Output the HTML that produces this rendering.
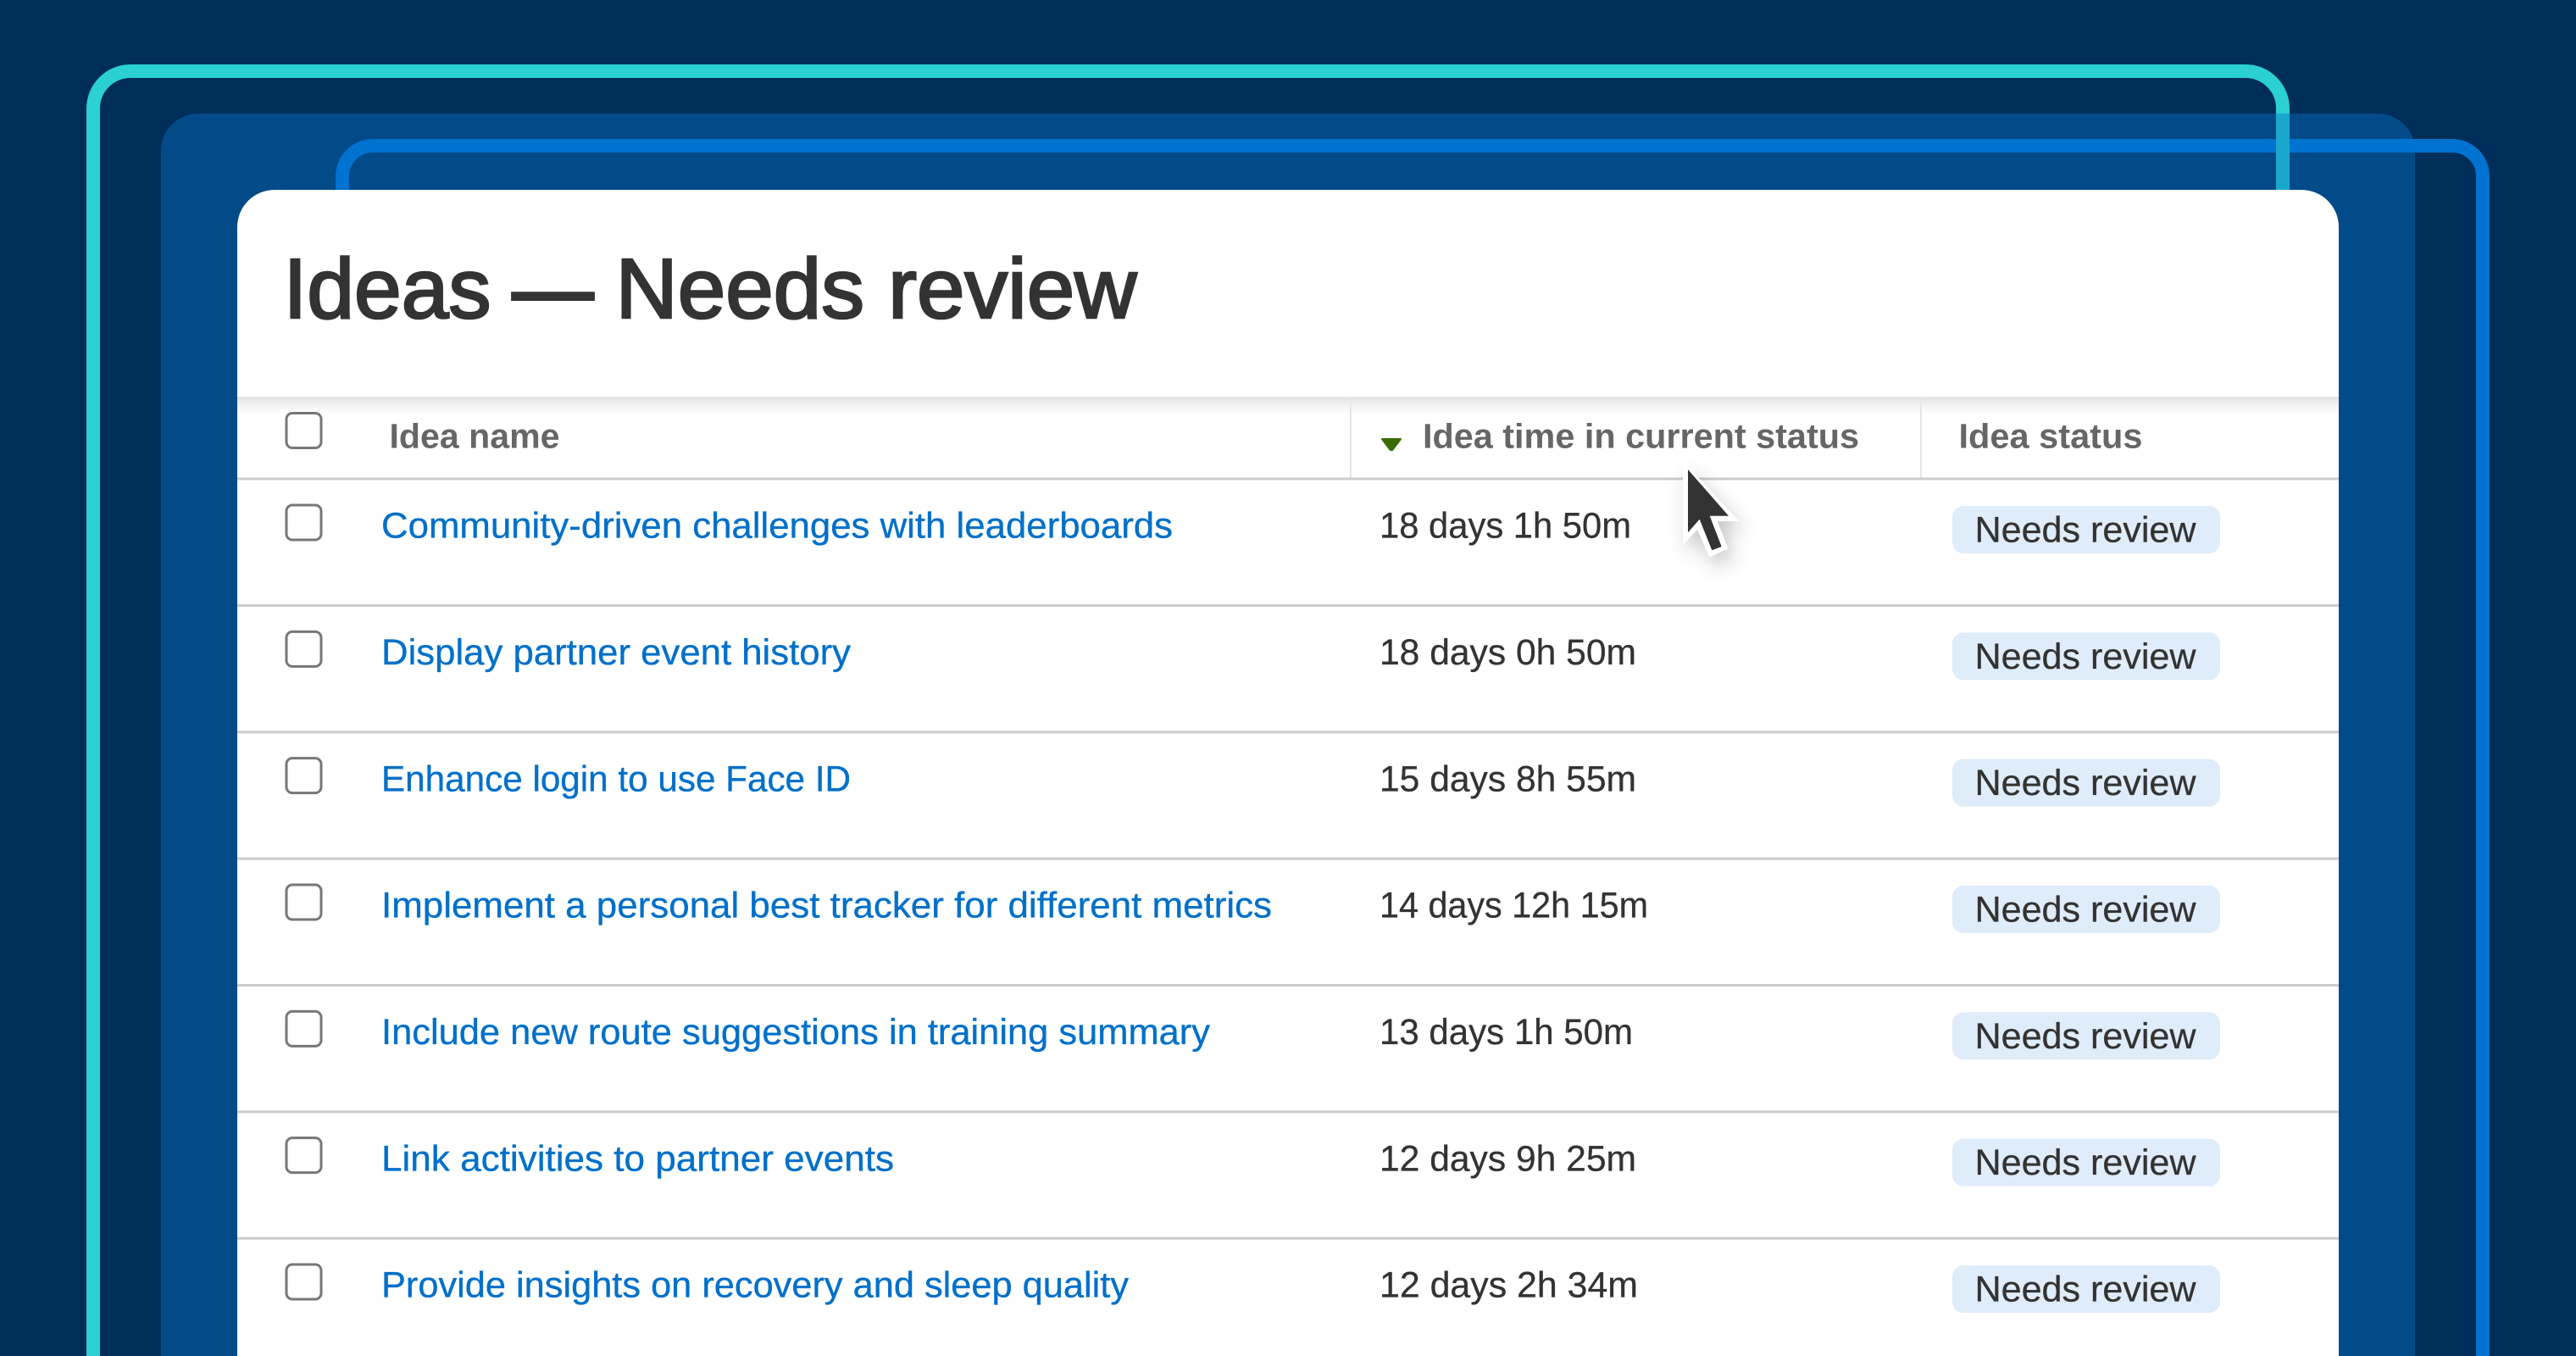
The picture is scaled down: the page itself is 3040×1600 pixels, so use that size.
<!DOCTYPE html>
<html lang="en">
<head>
<meta charset="utf-8">
<title>Ideas — Needs review</title>
<style>
html,body{margin:0;padding:0;width:3040px;height:1600px;overflow:hidden;background:#002e5b}
svg{display:block}
text{font-family:"Liberation Sans",Arial,sans-serif}
.t{font-size:43px;fill:#333;stroke:#333;stroke-width:.3px}
.l{font-size:43px;fill:#0070c9;stroke:#0070c9;stroke-width:.35px}
.h{font-size:41px;font-weight:bold;fill:#666}
.b{fill:#dfecf9}
.c{fill:#fff;stroke:#777;stroke-width:3}
.s{fill:#ccc}
.ti{font-size:100px;fill:#333;stroke:#333;stroke-width:2.6px}
</style>
</head>
<body>
<svg xmlns="http://www.w3.org/2000/svg" width="3040" height="1600" viewBox="0 0 3040 1600">
<defs>
<linearGradient id="sh" x1="0" y1="0" x2="0" y2="1">
<stop offset="0" stop-color="#e2e2e2"/><stop offset="1" stop-color="#fff"/>
</linearGradient>
</defs>
<rect width="3040" height="1600" fill="#002e5b"/>
<!-- teal outline -->
<path d="M110 1640V128a44 44 0 0 1 44-44H2650a44 44 0 0 1 44 44V1640" fill="none" stroke="#2ad0d3" stroke-width="16"/>
<!-- panel -->
<path d="M190 1640V178a44 44 0 0 1 44-44H2806a44 44 0 0 1 44 44V1640Z" fill="#034a89"/>
<!-- blue outline -->
<path d="M404 1640V208a36 36 0 0 1 36-36H2894a36 36 0 0 1 36 36V1640" fill="none" stroke="#0072cf" stroke-width="16"/>
<!-- teal under panel -->
<rect x="2686" y="134" width="16" height="100" fill="#1ba8ce"/>
<!-- card -->
<path d="M280 1640V268a44 44 0 0 1 44-44H2716a44 44 0 0 1 44 44V1640Z" fill="#fff"/>
<text class="ti" x="334.500" y="375" textLength="245" lengthAdjust="spacingAndGlyphs">Ideas</text>
<text class="ti" x="605" y="375" textLength="95" lengthAdjust="spacingAndGlyphs" style="stroke-width:4px">—</text>
<text class="ti" x="726.500" y="375" textLength="615" lengthAdjust="spacingAndGlyphs">Needs review</text>
<!-- header -->
<rect x="280" y="468" width="2480" height="20" fill="url(#sh)"/>
<rect x="1593" y="468" width="2" height="97" fill="#e6e6e6"/>
<rect x="2266" y="468" width="2" height="97" fill="#e6e6e6"/>
<rect class="c" x="338" y="487.500" width="41" height="41" rx="7"/>
<text class="h" x="459.500" y="528.500" textLength="201" lengthAdjust="spacingAndGlyphs">Idea name</text>
<path d="M1631 518H1653L1644 530Q1642 532.500 1640 530Z" fill="#3a6b00" stroke="#3a6b00" stroke-width="2" stroke-linejoin="round"/>
<text class="h" x="1679" y="528.500" textLength="515" lengthAdjust="spacingAndGlyphs">Idea time in current status</text>
<text class="h" x="2311.500" y="528.500" textLength="217" lengthAdjust="spacingAndGlyphs">Idea status</text>
<rect class="s" x="280" y="563.500" width="2480" height="3"/>

<g>
<rect class="c" x="338" y="596" width="41" height="41" rx="7"/>
<text class="l" x="450" y="634.700" textLength="934" lengthAdjust="spacingAndGlyphs">Community-driven challenges with leaderboards</text>
<text class="t" x="1628" y="634.700" textLength="297" lengthAdjust="spacingAndGlyphs">18 days 1h 50m</text>
<rect class="b" x="2304" y="597" width="316" height="56" rx="13"/>
<text class="t" x="2330.500" y="639.500" textLength="261" lengthAdjust="spacingAndGlyphs">Needs review</text>
<rect class="s" x="280" y="713" width="2480" height="3"/>
</g>
<g transform="translate(0,149.33)">
<rect class="c" x="338" y="596" width="41" height="41" rx="7"/>
<text class="l" x="450" y="634.700" textLength="554" lengthAdjust="spacingAndGlyphs">Display partner event history</text>
<text class="t" x="1628" y="634.700" textLength="303" lengthAdjust="spacingAndGlyphs">18 days 0h 50m</text>
<rect class="b" x="2304" y="597" width="316" height="56" rx="13"/>
<text class="t" x="2330.500" y="639.500" textLength="261" lengthAdjust="spacingAndGlyphs">Needs review</text>
<rect class="s" x="280" y="713" width="2480" height="3"/>
</g>
<g transform="translate(0,298.67)">
<rect class="c" x="338" y="596" width="41" height="41" rx="7"/>
<text class="l" x="450" y="634.700" textLength="554" lengthAdjust="spacingAndGlyphs">Enhance login to use Face ID</text>
<text class="t" x="1628" y="634.700" textLength="303" lengthAdjust="spacingAndGlyphs">15 days 8h 55m</text>
<rect class="b" x="2304" y="597" width="316" height="56" rx="13"/>
<text class="t" x="2330.500" y="639.500" textLength="261" lengthAdjust="spacingAndGlyphs">Needs review</text>
<rect class="s" x="280" y="713" width="2480" height="3"/>
</g>
<g transform="translate(0,448)">
<rect class="c" x="338" y="596" width="41" height="41" rx="7"/>
<text class="l" x="450" y="634.700" textLength="1051" lengthAdjust="spacingAndGlyphs">Implement a personal best tracker for different metrics</text>
<text class="t" x="1628" y="634.700" textLength="317" lengthAdjust="spacingAndGlyphs">14 days 12h 15m</text>
<rect class="b" x="2304" y="597" width="316" height="56" rx="13"/>
<text class="t" x="2330.500" y="639.500" textLength="261" lengthAdjust="spacingAndGlyphs">Needs review</text>
<rect class="s" x="280" y="713" width="2480" height="3"/>
</g>
<g transform="translate(0,597.33)">
<rect class="c" x="338" y="596" width="41" height="41" rx="7"/>
<text class="l" x="450" y="634.700" textLength="978" lengthAdjust="spacingAndGlyphs">Include new route suggestions in training summary</text>
<text class="t" x="1628" y="634.700" textLength="299" lengthAdjust="spacingAndGlyphs">13 days 1h 50m</text>
<rect class="b" x="2304" y="597" width="316" height="56" rx="13"/>
<text class="t" x="2330.500" y="639.500" textLength="261" lengthAdjust="spacingAndGlyphs">Needs review</text>
<rect class="s" x="280" y="713" width="2480" height="3"/>
</g>
<g transform="translate(0,746.67)">
<rect class="c" x="338" y="596" width="41" height="41" rx="7"/>
<text class="l" x="450" y="634.700" textLength="605" lengthAdjust="spacingAndGlyphs">Link activities to partner events</text>
<text class="t" x="1628" y="634.700" textLength="303" lengthAdjust="spacingAndGlyphs">12 days 9h 25m</text>
<rect class="b" x="2304" y="597" width="316" height="56" rx="13"/>
<text class="t" x="2330.500" y="639.500" textLength="261" lengthAdjust="spacingAndGlyphs">Needs review</text>
<rect class="s" x="280" y="713" width="2480" height="3"/>
</g>
<g transform="translate(0,896)">
<rect class="c" x="338" y="596" width="41" height="41" rx="7"/>
<text class="l" x="450" y="634.700" textLength="882" lengthAdjust="spacingAndGlyphs">Provide insights on recovery and sleep quality</text>
<text class="t" x="1628" y="634.700" textLength="305" lengthAdjust="spacingAndGlyphs">12 days 2h 34m</text>
<rect class="b" x="2304" y="597" width="316" height="56" rx="13"/>
<text class="t" x="2330.500" y="639.500" textLength="261" lengthAdjust="spacingAndGlyphs">Needs review</text>
</g>

<!-- cursor -->
<g transform="translate(1960,530)">
<path d="M26 14V113L43 95L57.300 127.700L79.300 117.300L66.700 85H92.300Z" fill="#fff" style="filter:drop-shadow(6px 11px 11px rgba(0,0,0,.22))"/>
<path d="M32 24V98.300L45.700 82.700L60.300 119.300L71.700 115L57.700 78.700H80Z" fill="#333"/>
</g>
</svg>
</body>
</html>
